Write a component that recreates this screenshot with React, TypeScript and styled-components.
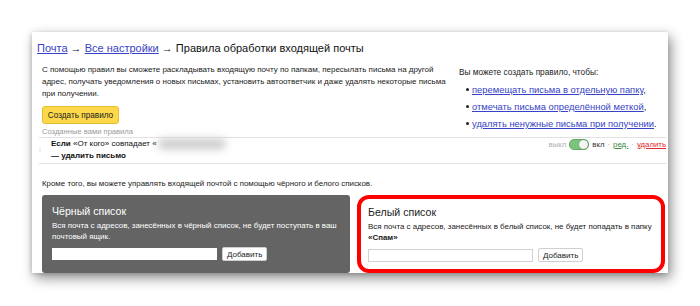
import styled, { createGlobalStyle } from "styled-components";

const Global = createGlobalStyle`
  html, body {
    margin: 0;
    padding: 0;
    background: #fff;
    overflow: hidden;
  }
  body {
    font-family: "Liberation Sans", Arial, sans-serif;
    color: #222;
  }
`;

const Page = styled.div`
  width: 700px;
  height: 306px;
  padding: 32px 0 0 32px;
  box-sizing: border-box;
`;

const Card = styled.div`
  width: 636px;
  height: 241px;
  background: #fff;
  box-shadow: 3px 5px 12px rgba(0, 0, 0, 0.45), -1px 1px 4px rgba(0, 0, 0, 0.15);
  display: flex;
  flex-direction: column;
  box-sizing: border-box;
  padding: 8px 0 0 0;
`;

const Crumbs = styled.div`
  font-size: 11px;
  line-height: 16px;
  padding-left: 5px;
  color: #111;
`;

const Link = styled.a<{ $color?: string }>`
  color: ${(p) => p.$color || "#3643c4"};
  text-decoration: underline;
  cursor: pointer;
`;

const Top = styled.div`
  display: flex;
  padding: 8px 0 0 10px;
`;

const LeftCol = styled.div`
  width: 405px;
  display: flex;
  flex-direction: column;
  align-items: flex-start;
`;

const Text = styled.p<{ $size?: number }>`
  margin: 0;
  font-size: ${(p) => p.$size || 8}px;
  line-height: 12px;
  color: #222;
`;

const Yellow = styled.button`
  margin-top: 6px;
  height: 18px;
  width: 77px;
  padding: 0;
  background: #fcd84a;
  border: 1px solid #e4be2c;
  border-radius: 3px;
  font-family: inherit;
  font-size: 8.2px;
  color: #222;
`;

const Caption = styled.div`
  margin-top: 3px;
  font-size: 7.6px;
  line-height: 10px;
  color: #9a9a9a;
`;

const RightCol = styled.div`
  margin-left: 12px;
  padding-top: 2px;
  display: flex;
  flex-direction: column;
`;

const List = styled.ul`
  margin: 3px 0 0 0;
  padding: 0 0 0 13px;
  list-style: none;
`;

const Item = styled.li`
  position: relative;
  font-size: 9.4px;
  line-height: 17px;
  &::before {
    content: "";
    position: absolute;
    left: -6px;
    top: 7px;
    width: 3px;
    height: 3px;
    border-radius: 50%;
    background: #222;
  }
`;

const Rule = styled.div`
  margin: 0 2px 0 7px;
  border-top: 1px solid #e2e2e2;
  border-bottom: 1px solid #e2e2e2;
  height: 25px;
  display: flex;
  align-items: flex-start;
`;

const Handle = styled.div`
  width: 12px;
  padding-top: 8px;
  font-size: 7px;
  color: #ccc;
  text-align: left;
`;

const RuleText = styled.div`
  flex: 1;
  font-size: 8px;
  line-height: 12px;
  color: #111;
`;

const Blur = styled.span`
  display: inline-block;
  vertical-align: middle;
  width: 68px;
  height: 10px;
  margin-left: 1px;
  background: #c8c8c8;
  border-radius: 5px;
  filter: blur(4px);
`;

const Controls = styled.div`
  display: flex;
  align-items: center;
  gap: 3px;
  font-size: 7.8px;
  padding-top: 1px;
  color: #333;
`;

const Off = styled.span`
  color: #b0b0b0;
`;

const Toggle = styled.span`
  position: relative;
  width: 18px;
  height: 9px;
  border-radius: 5px;
  background: #7cc47c;
  border: 1px solid #64a964;
  &::after {
    content: "";
    position: absolute;
    right: 0;
    top: 0;
    width: 9px;
    height: 9px;
    border-radius: 50%;
    background: #f4f4f4;
    box-shadow: 0 0 1px rgba(0, 0, 0, 0.5);
  }
`;

const Dot = styled.span`
  color: #999;
`;

const Note = styled.div`
  margin: 14px 0 0 10px;
  font-size: 7.9px;
  line-height: 12px;
  color: #222;
`;

const Panels = styled.div`
  margin: 5px 0 0 10px;
  display: flex;
  gap: 7px;
  align-items: flex-start;
`;

const Panel = styled.div<{ $dark?: boolean }>`
  width: 308px;
  height: 78px;
  box-sizing: border-box;
  border-radius: ${(p) => (p.$dark ? "3px" : "12px")};
  background: ${(p) => (p.$dark ? "#646464" : "#fff")};
  border: ${(p) => (p.$dark ? "none" : "4px solid #f00")};
  color: ${(p) => (p.$dark ? "#fff" : "#222")};
  padding: ${(p) => (p.$dark ? "9px 4px 0 10px" : "6px 2px 0 7px")};
  display: flex;
  flex-direction: column;
`;

const PanelTitle = styled.div`
  font-size: 10.6px;
  line-height: 14px;
`;

const PanelText = styled.div`
  margin-top: 2px;
  font-size: 7.95px;
  line-height: 11px;
`;

const Form = styled.div`
  margin-top: 5px;
  display: flex;
  align-items: center;
  gap: 5px;
`;

const Input = styled.input<{ $dark?: boolean }>`
  width: 165px;
  height: ${(p) => (p.$dark ? "12px" : "13px")};
  box-sizing: border-box;
  border: 1px solid ${(p) => (p.$dark ? "#fff" : "#d2d2d2")};
  background: #fff;
  padding: 0;
  margin: 0;
`;

const Add = styled.button`
  height: 14px;
  padding: 0 4px;
  background: #fff;
  border: 1px solid #cfcfcf;
  border-radius: 2px;
  font-family: inherit;
  font-size: 8px;
  color: #222;
`;

export default function App() {
  return (
    <>
      <Global />
      <Page>
        <Card>
          <Crumbs>
            <Link>Почта</Link> → <Link>Все настройки</Link> → Правила
            обработки входящей почты
          </Crumbs>
          <Top>
            <LeftCol>
              <Text>
                С помощью правил вы сможете раскладывать входящую почту по
                папкам, пересылать письма на другой адрес, получать уведомления
                о новых письмах, установить автоответчик и даже удалять
                некоторые письма при получении.
              </Text>
              <Yellow>Создать правило</Yellow>
              <Caption>Созданные вами правила</Caption>
            </LeftCol>
            <RightCol>
              <Text $size={8.3}>Вы можете создать правило, чтобы:</Text>
              <List>
                <Item>
                  <Link>перемещать письма в отдельную папку</Link>,
                </Item>
                <Item>
                  <Link>отмечать письма определённой меткой</Link>,
                </Item>
                <Item>
                  <Link>удалять ненужные письма при получении</Link>.
                </Item>
              </List>
            </RightCol>
          </Top>
          <Rule>
            <Handle>⁞</Handle>
            <RuleText>
              <b>Если</b> «От кого» совпадает «<Blur />
              <br />
              <b>— удалить письмо</b>
            </RuleText>
            <Controls>
              <Off>выкл</Off>
              <Toggle />
              <span>вкл</span>
              <Dot>·</Dot>
              <Link $color="#3a8a3a">ред.</Link>
              <Dot>·</Dot>
              <Link $color="#e0282c">удалить</Link>
            </Controls>
          </Rule>
          <Note>
            Кроме того, вы можете управлять входящей почтой с помощью чёрного и
            белого списков.
          </Note>
          <Panels>
            <Panel $dark>
              <PanelTitle>Чёрный список</PanelTitle>
              <PanelText>
                Вся почта с адресов, занесённых в чёрный список, не будет
                поступать в ваш почтовый ящик.
              </PanelText>
              <Form>
                <Input $dark />
                <Add>Добавить</Add>
              </Form>
            </Panel>
            <Panel>
              <PanelTitle>Белый список</PanelTitle>
              <PanelText>
                Вся почта с адресов, занесённых в белый список, не будет
                попадать в папку <b>«Спам»</b>
              </PanelText>
              <Form>
                <Input />
                <Add>Добавить</Add>
              </Form>
            </Panel>
          </Panels>
        </Card>
      </Page>
    </>
  );
}
